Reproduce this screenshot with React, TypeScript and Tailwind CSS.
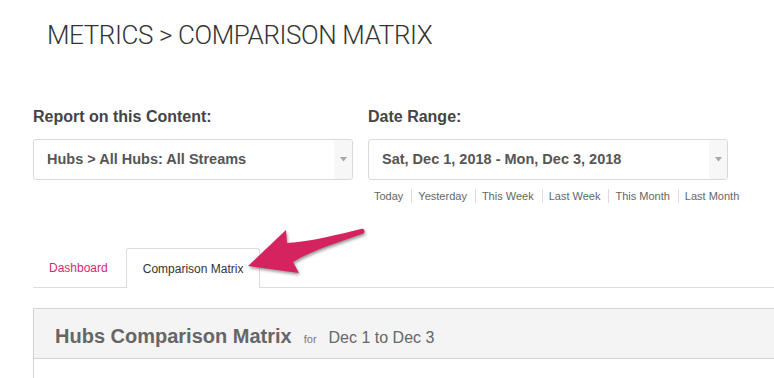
import React from "react";

const links = ["Today", "Yesterday", "This Week", "Last Week", "This Month", "Last Month"];

function Select({ text, width }: { text: string; width: string }) {
  return (
    <div className={`flex h-[41px] ${width} items-stretch rounded-[3px] border border-[#d9d9d9] bg-white`}>
      <div className="flex flex-1 items-center pl-[13px] text-[14.5px] font-bold text-[#555]">{text}</div>
      <div className="flex w-[18px] items-center justify-center rounded-r-[3px] bg-[#f7f7f7]">
        <svg width="7" height="5" viewBox="0 0 7 5">
          <path d="M0 0 L7 0 L3.5 4.5 Z" fill="#a8a8a8" />
        </svg>
      </div>
    </div>
  );
}

export default function App() {
  return (
    <div className="relative h-[378px] w-[774px] overflow-hidden bg-white pl-[33px] font-['Liberation_Sans',Arial,sans-serif]">
      <h1 className="pl-[14px] pt-[19px] font-['Roboto',sans-serif] text-[26px] font-light leading-[32px] tracking-[-0.4px] text-[#333]">
        METRICS &gt; COMPARISON MATRIX
      </h1>

      <div className="mt-[57px] flex gap-[15px]">
        <div className="flex flex-col">
          <div className="text-[16px] font-bold leading-[18px] text-[#444]">Report on this Content:</div>
          <div className="mt-[13px]">
            <Select text="Hubs > All Hubs: All Streams" width="w-[320px]" />
          </div>
        </div>
        <div className="flex flex-col">
          <div className="text-[16px] font-bold leading-[18px] text-[#444]">Date Range:</div>
          <div className="mt-[13px]">
            <Select text="Sat, Dec 1, 2018 - Mon, Dec 3, 2018" width="w-[360px]" />
          </div>
          <div className="mt-[9px] flex pl-[6px] text-[11px] leading-[14px] text-[#666]">
            {links.map((l, i) => (
              <span
                key={l}
                className={
                  i === 0
                    ? "pr-[8px]"
                    : "border-l border-[#dcdcdc] px-[6px] pr-[8px]"
                }
              >
                {l}
              </span>
            ))}
          </div>
        </div>
      </div>

      <div className="mt-[45px] flex items-end border-b border-[#dcdcdc]">
        <div className="flex h-[39px] items-center pl-[16px] pr-[18px] text-[12px] text-[#d42a6c]">Dashboard</div>
        <div className="-mb-px flex h-[40px] items-center rounded-t-[3px] border border-b-0 border-[#dcdcdc] bg-white px-[16px] text-[12px] text-[#333]">
          Comparison Matrix
        </div>
      </div>

      <div className="mt-[20px] border-l border-t border-[#d4d4d4]">
        <div className="flex h-[50px] items-baseline border-b border-[#d4d4d4] bg-[#f4f4f4] pl-[21px] pt-[12px]">
          <span className="text-[20px] font-bold text-[#666]">Hubs Comparison Matrix</span>
          <span className="ml-[12px] text-[11px] text-[#777]">for</span>
          <span className="ml-[12px] text-[16px] text-[#666]">Dec 1 to Dec 3</span>
        </div>
        <div className="h-[40px] bg-white"></div>
      </div>

      <svg
        className="absolute left-[240px] top-[220px] drop-shadow-[1px_2px_1.5px_rgba(0,0,0,0.4)]"
        width="135"
        height="62"
        viewBox="0 0 135 62"
      >
        <path
          d="M8,46 L46,10 L47,23 C70,22 100,14 121,9 C125,8 126,13 122,14 C100,22 72,30 53,42 L59,53 Z"
          fill="#d4235f"
        />
      </svg>
    </div>
  );
}
